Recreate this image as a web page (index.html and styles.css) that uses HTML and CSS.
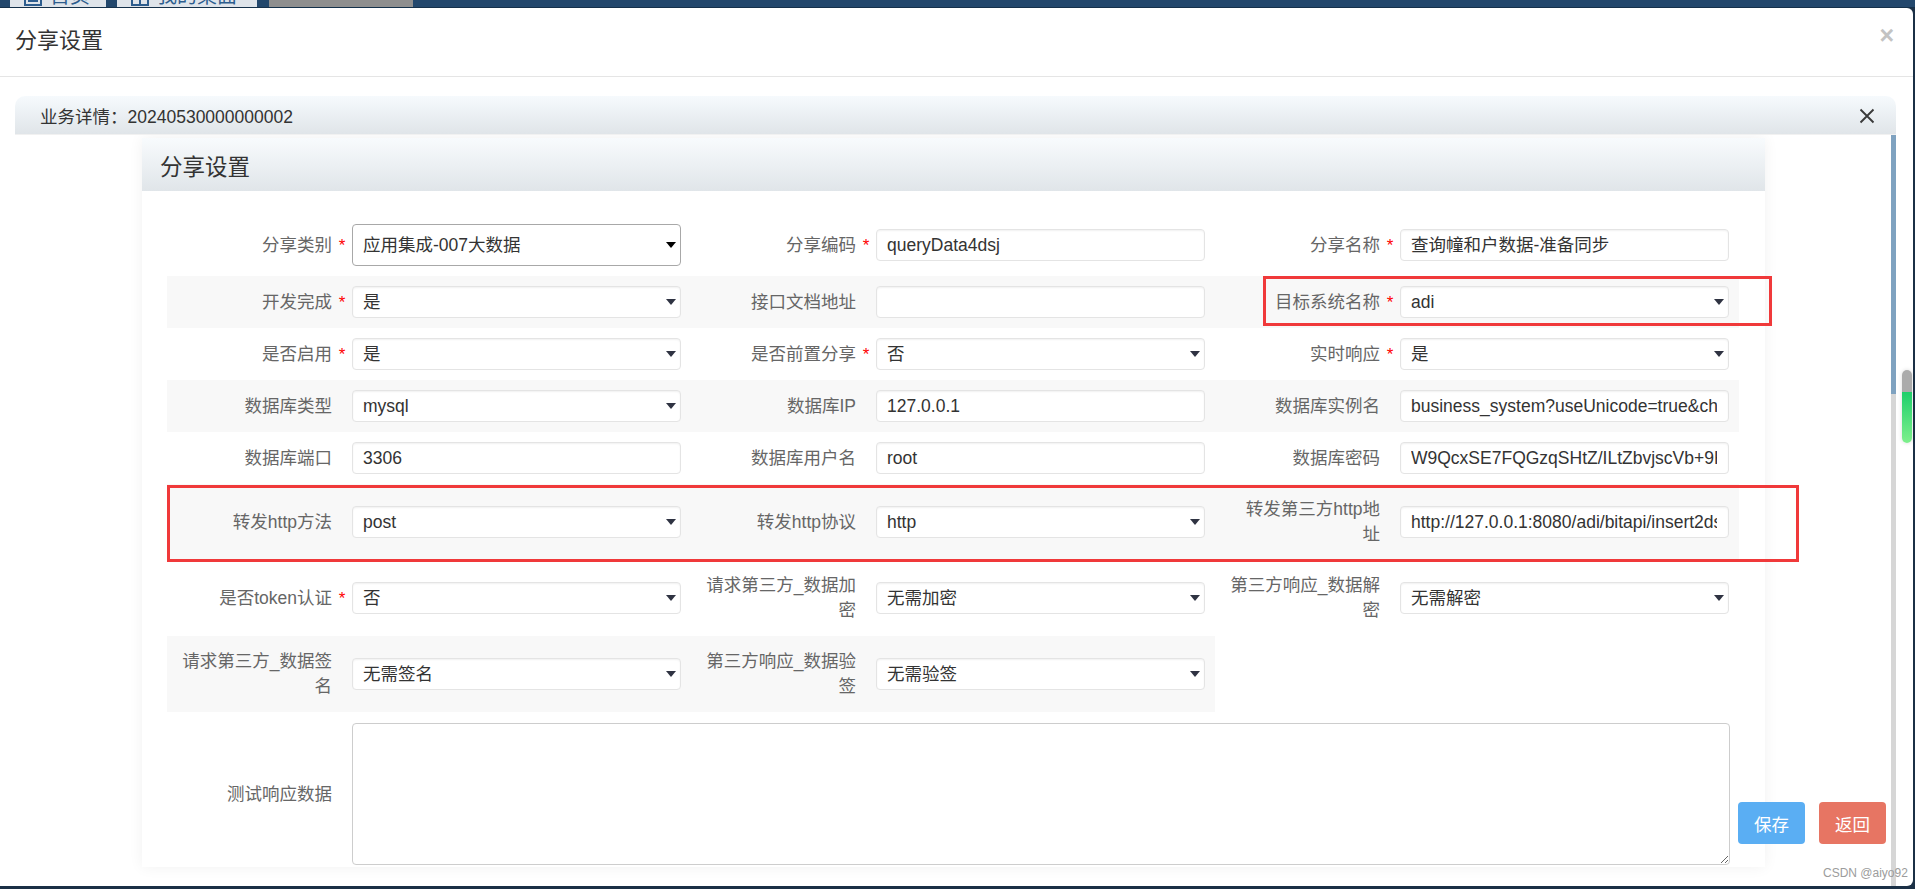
FILE: index.html
```html
<!DOCTYPE html>
<html lang="zh-CN">
<head>
<meta charset="utf-8">
<title>分享设置</title>
<link rel="stylesheet" href="styles.css">
</head>
<body>
<div class="topbar">
  <div class="tab t1"><svg class="ticon" width="18" height="20" viewBox="0 0 18 20"><rect x="1" y="2" width="16" height="16" fill="none" stroke="#2d5d8e" stroke-width="2"/><line x1="4" y1="14" x2="14" y2="14" stroke="#2d5d8e" stroke-width="2"/></svg><span>首页</span></div>
  <div class="tab t2"><svg class="ticon" width="18" height="20" viewBox="0 0 18 20"><rect x="1" y="2" width="16" height="16" fill="none" stroke="#2d5d8e" stroke-width="2"/><line x1="9" y1="6" x2="9" y2="18" stroke="#2d5d8e" stroke-width="2"/></svg><span>我的桌面</span></div>
  <div class="tab t3"></div>
</div>

<div class="modal">
  <div class="modal-header">
    <h3 class="modal-title">分享设置</h3>
    <span class="modal-close">×</span>
  </div>
  <div class="modal-body">
    <div class="biz">
      <div class="biz-head">
        <span>业务详情：20240530000000002</span>
        <svg class="biz-x" width="16" height="16" viewBox="0 0 16 16"><path d="M1.5 1.5 L14.5 14.5 M14.5 1.5 L1.5 14.5" stroke="#3a3a3a" stroke-width="1.9" fill="none"/></svg>
      </div>
      <div class="biz-body">
        <div class="content">
          <div class="panel">
            <div class="panel-head">分享设置</div>
            <div class="form">
              <div class="row">
                <div class="field"><label class="lbl">分享类别</label><span class="star">*</span><div class="ctl sel native"><span class="v">应用集成-007大数据</span></div></div>
                <div class="field"><label class="lbl">分享编码</label><span class="star">*</span><div class="ctl"><span class="v">queryData4dsj</span></div></div>
                <div class="field"><label class="lbl">分享名称</label><span class="star">*</span><div class="ctl"><span class="v">查询幢和户数据-准备同步</span></div></div>
              </div>
              <div class="row alt">
                <div class="field"><label class="lbl">开发完成</label><span class="star">*</span><div class="ctl sel"><span class="v">是</span></div></div>
                <div class="field"><label class="lbl">接口文档地址</label><span class="star"></span><div class="ctl"><span class="v"></span></div></div>
                <div class="field"><label class="lbl">目标系统名称</label><span class="star">*</span><div class="ctl sel"><span class="v">adi</span></div></div>
              </div>
              <div class="row">
                <div class="field"><label class="lbl">是否启用</label><span class="star">*</span><div class="ctl sel"><span class="v">是</span></div></div>
                <div class="field"><label class="lbl">是否前置分享</label><span class="star">*</span><div class="ctl sel"><span class="v">否</span></div></div>
                <div class="field"><label class="lbl">实时响应</label><span class="star">*</span><div class="ctl sel"><span class="v">是</span></div></div>
              </div>
              <div class="row alt">
                <div class="field"><label class="lbl">数据库类型</label><span class="star"></span><div class="ctl sel"><span class="v">mysql</span></div></div>
                <div class="field"><label class="lbl">数据库IP</label><span class="star"></span><div class="ctl"><span class="v">127.0.0.1</span></div></div>
                <div class="field"><label class="lbl">数据库实例名</label><span class="star"></span><div class="ctl"><span class="v">business_system?useUnicode=true&amp;characterEncoding=utf8</span></div></div>
              </div>
              <div class="row">
                <div class="field"><label class="lbl">数据库端口</label><span class="star"></span><div class="ctl"><span class="v">3306</span></div></div>
                <div class="field"><label class="lbl">数据库用户名</label><span class="star"></span><div class="ctl"><span class="v">root</span></div></div>
                <div class="field"><label class="lbl">数据库密码</label><span class="star"></span><div class="ctl"><span class="v">W9QcxSE7FQGzqSHtZ/ILtZbvjscVb+9Hk2Qp</span></div></div>
              </div>
              <div class="row alt">
                <div class="field"><label class="lbl">转发http方法</label><span class="star"></span><div class="ctl sel"><span class="v">post</span></div></div>
                <div class="field"><label class="lbl">转发http协议</label><span class="star"></span><div class="ctl sel"><span class="v">http</span></div></div>
                <div class="field"><label class="lbl">转发第三方http地<br>址</label><span class="star"></span><div class="ctl"><span class="v">http://127.0.0.1:8080/adi/bitapi/insert2dsj</span></div></div>
              </div>
              <div class="row">
                <div class="field"><label class="lbl">是否token认证</label><span class="star">*</span><div class="ctl sel"><span class="v">否</span></div></div>
                <div class="field"><label class="lbl">请求第三方_数据加<br>密</label><span class="star"></span><div class="ctl sel"><span class="v">无需加密</span></div></div>
                <div class="field"><label class="lbl">第三方响应_数据解<br>密</label><span class="star"></span><div class="ctl sel"><span class="v">无需解密</span></div></div>
              </div>
              <div class="row alt">
                <div class="field"><label class="lbl">请求第三方_数据签<br>名</label><span class="star"></span><div class="ctl sel"><span class="v">无需签名</span></div></div>
                <div class="field"><label class="lbl">第三方响应_数据验<br>签</label><span class="star"></span><div class="ctl sel"><span class="v">无需验签</span></div></div>
              </div>
              <div class="row">
                <div class="field wide"><label class="lbl">测试响应数据</label><span class="star"></span><textarea class="ta"></textarea></div>
              </div>
            </div>
          </div>
        </div>
        <div class="scroll"></div>
        <div class="actions">
          <button class="btn save">保存</button>
          <button class="btn back">返回</button>
        </div>
      </div>
    </div>
  </div>
</div>

<div class="annot a1"></div>
<div class="annot a2"></div>
<div class="pill"><div class="pill-top"></div><div class="pill-green"></div></div>
<div class="watermark">CSDN @aiyo92</div>
</body>
</html>
```

FILE: styles.css
```css
* { box-sizing: border-box; }
html, body { margin: 0; padding: 0; }
body {
  width: 1915px;
  height: 889px;
  overflow: hidden;
  position: relative;
  background: #1b3046;
  font-family: "Liberation Sans", "Noto Sans CJK SC", sans-serif;
  color: #333;
}

/* top tab strip (mostly hidden behind modal) */
.topbar {
  height: 8px;
  background: #22476c;
  border-bottom: 1px solid #14304a;
  display: flex;
  overflow: hidden;
}
.tab {
  height: 7px;
  overflow: hidden;
  display: flex;
  align-items: flex-start;
  gap: 8px;
  padding-left: 14px;
  background: #dfe4ea;
  color: #2d5d8e;
  font-size: 20px;
}
.tab span { display: block; line-height: 20px; margin-top: -14px; }
.tab .ticon { margin-top: -13px; flex: none; }
.t1 { margin-left: 10px; width: 96px; }
.t2 { margin-left: 11px; width: 140px; }
.t3 { margin-left: 12px; width: 144px; background: #8e8e8e; }

/* modal */
.modal {
  width: 1913px;
  height: 878px;
  background: #fff;
  border-radius: 0 6px 6px 0;
  display: flex;
  flex-direction: column;
  overflow: hidden;
}
.modal-header {
  height: 69px;
  flex: none;
  border-bottom: 1px solid #e5e5e5;
  display: flex;
  align-items: flex-start;
  justify-content: space-between;
  padding: 0 19px 0 15px;
}
.modal-title {
  margin: 18px 0 0;
  font-size: 22px;
  font-weight: normal;
  line-height: 30px;
  color: #333;
}
.modal-close {
  margin-top: 16px;
  font-size: 25px;
  font-weight: bold;
  line-height: 22px;
  color: #c3c3c3;
}
.modal-body {
  flex: 1;
  padding: 19px 17px 0 15px;
}

/* business detail frame */
.biz {
  height: 790px;
  display: flex;
  flex-direction: column;
}
.biz-head {
  height: 38px;
  flex: none;
  border-radius: 10px 10px 0 0;
  background: linear-gradient(#f6fafd, #e0e5e9);
  display: flex;
  align-items: center;
  justify-content: space-between;
  padding: 0 21px 0 25px;
  font-size: 17.5px;
  color: #333;
}
.biz-x { flex: none; margin-top: 2px; }
.biz-body {
  flex: 1;
  display: flex;
  position: relative;
  overflow: hidden;
  border-top: 1px solid #f1f1f1;
}
.content {
  flex: 1;
  padding: 3px 126px 0 127px;
}
.scroll {
  width: 5px;
  flex: none;
  background: linear-gradient(#7fa2c0 0, #7fa2c0 259px, #d6d6d6 259px, #d6d6d6 100%);
}

/* inner panel */
.panel {
  background: #fff;
  box-shadow: 0 0 14px rgba(0, 0, 0, 0.06);
}
.panel-head {
  height: 53px;
  background: linear-gradient(#f8fbfd, #e0e5e9);
  font-size: 22.5px;
  padding-left: 18px;
  display: flex;
  align-items: center;
  color: #333;
}
.form {
  padding: 23px 26px 1px 25px;
}
.row { display: flex; }
.field {
  width: 524px;
  flex: none;
  display: flex;
  align-items: center;
  padding: 10px 10px 10px 0;
}
.row.alt .field { background: #f8f8f8; }
.lbl {
  width: 165px;
  flex: none;
  text-align: right;
  color: #666;
  font-size: 17.5px;
  line-height: 25px;
  padding: 3px 0;
}
.star {
  width: 20px;
  flex: none;
  text-align: center;
  color: #f00;
  font-size: 17px;
  line-height: 25px;
}
.ctl {
  width: 329px;
  height: 32px;
  flex: none;
  border: 1px solid #e4e4e4;
  border-radius: 4px;
  background: #fff;
  box-shadow: inset 0 1px 2px rgba(0, 0, 0, 0.06);
  padding: 0 11px 0 10px;
  display: flex;
  align-items: center;
  position: relative;
  font-size: 17.5px;
  color: #333;
}
.ctl .v {
  flex: 1;
  overflow: hidden;
  white-space: nowrap;
  line-height: 30px;
}
.ctl.sel { padding-right: 24px; }
.ctl.sel::after {
  content: "";
  position: absolute;
  right: 4px;
  top: 50%;
  margin-top: -3px;
  border-left: 5.5px solid transparent;
  border-right: 5.5px solid transparent;
  border-top: 6px solid #2f3342;
}
.ctl.native {
  height: 42px;
  border: 1px solid #a8a8a8;
  box-shadow: none;
}
.ctl.native::after { border-top-color: #000; }

.field.wide {
  width: 1572px;
  padding: 11px 9px 1px 0;
}
.ta {
  width: 1378px;
  height: 142px;
  flex: none;
  border: 1px solid #cdcdcd;
  border-radius: 4px;
  resize: vertical;
  font-family: inherit;
  font-size: 17.5px;
  margin: 0;
}

/* action buttons floating at the right */
.actions {
  position: absolute;
  left: 1723px;
  top: 667px;
  display: flex;
  gap: 14px;
}
.btn {
  width: 67px;
  height: 42px;
  border: 0;
  border-radius: 4px;
  color: #fff;
  font-family: inherit;
  font-size: 17.5px;
  padding: 0;
}
.save { background: #5aaef3; }
.back { background: #e77563; }

/* annotation boxes drawn on top of the screenshot */
.annot {
  position: absolute;
  border: 3px solid #f0393a;
}
.a1 { left: 1263px; top: 276px; width: 509px; height: 50px; }
.a2 { left: 167px; top: 485px; width: 1632px; height: 77px; }

/* overlay scroll indicator */
.pill {
  position: absolute;
  left: 1902px;
  top: 370px;
  width: 10px;
  height: 73px;
  border-radius: 5px;
  overflow: hidden;
  box-shadow: 0 0 4px rgba(0, 0, 0, 0.15);
  display: flex;
  flex-direction: column;
}
.pill-top { height: 22px; background: #ababab; }
.pill-green { flex: 1; background: linear-gradient(#1fcf6b, #7ef08c); }

.watermark {
  position: absolute;
  left: 1823px;
  top: 865px;
  font-size: 12px;
  line-height: 16px;
  color: #9c9c9c;
}
```
